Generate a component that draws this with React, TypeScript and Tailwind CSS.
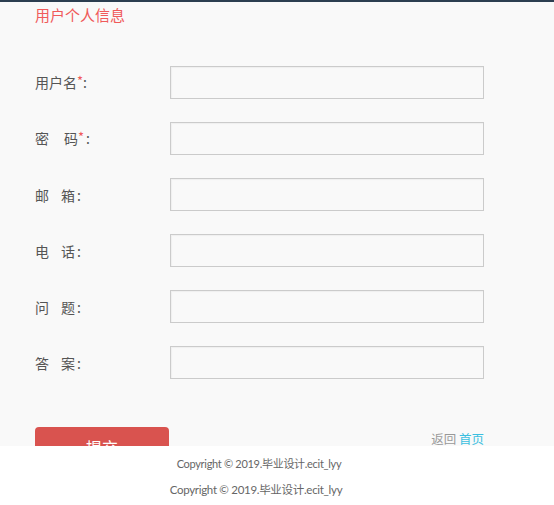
import React from 'react';

const Star = () => <span className="text-[#f05a5a] text-[13px] relative -top-[2px]">*</span>;

const fields: { label: React.ReactNode; key: string }[] = [
  { key: 'username', label: <>用户名<Star />:</> },
  {
    key: 'password',
    label: (
      <>
        <span className="mr-[15px]">密</span>码<Star />
        <span className="ml-[2px]">:</span>
      </>
    ),
  },
  { key: 'email', label: <><span className="mr-[12px]">邮</span>箱<span className="ml-[2px]">:</span></> },
  { key: 'phone', label: <><span className="mr-[12px]">电</span>话<span className="ml-[2px]">:</span></> },
  { key: 'question', label: <><span className="mr-[12px]">问</span>题<span className="ml-[2px]">:</span></> },
  { key: 'answer', label: <><span className="mr-[12px]">答</span>案<span className="ml-[2px]">:</span></> },
];

export default function App() {
  return (
    <div className="w-[554px] h-[505px] bg-white font-['Noto_Sans_CJK_SC',sans-serif]">
      <div className="h-[446px] overflow-hidden bg-[#f9f9f9] border-t-2 border-[#2c3e50] px-[35px]">
        <h2 className="mt-[3px] text-[15px] leading-[20px] text-[#f05a5a]">用户个人信息</h2>

        <div className="mt-[41px] flex flex-col gap-[23px]">
          {fields.map((f) => (
            <div key={f.key} className="flex items-center h-[33px]">
              <label className="w-[135px] text-[14px] leading-[20px] text-[#555] whitespace-nowrap">
                {f.label}
              </label>
              <input
                type="text"
                className="w-[314px] h-[33px] border border-[#cbcbcb] bg-[#f9f9f9] shadow-[inset_1px_1px_1px_rgba(0,0,0,0.04)] focus:outline-none"
              />
            </div>
          ))}
        </div>

        <div className="mt-[48px] flex items-start justify-between w-[449px]">
          <button className="w-[134px] h-[40px] rounded-[4px] bg-[#d9534f] text-white text-[16px]">
            提交
          </button>
          <div className="mt-[3px] text-[12.5px] leading-[18px] text-[#999]">
            返回 <a className="text-[#3bbfe0]">首页</a>
          </div>
        </div>
      </div>

      <footer className="flex flex-col items-center pr-[36px] text-[#666] font-['Lato','Noto_Sans_CJK_SC',sans-serif] tracking-[-0.3px]">
        <p className="mt-[10px] text-[11px] leading-[16px]">Copyright © 2019.毕业设计.ecit_lyy</p>
        <p className="mt-[10px] text-[11.5px] leading-[16px] -ml-[6px]">Copyright © 2019.毕业设计.ecit_lyy</p>
      </footer>
    </div>
  );
}
